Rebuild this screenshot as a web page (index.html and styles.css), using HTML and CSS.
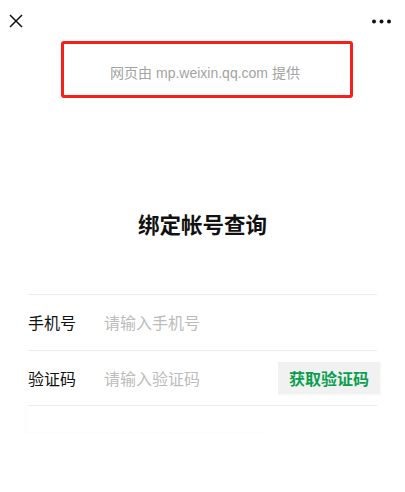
FILE: index.html
```html
<!DOCTYPE html>
<html lang="zh-CN">
<head>
<meta charset="utf-8">
<title>绑定帐号查询</title>
<link rel="stylesheet" href="styles.css">
</head>
<body>
<div class="page">
  <div class="topbar">
    <svg class="close" width="14" height="14" viewBox="0 0 14 14"><path d="M1 1L13 13M13 1L1 13" stroke="#111" stroke-width="1.5" fill="none"/></svg>
    <svg class="more" width="19" height="5" viewBox="0 0 19 5"><circle cx="2" cy="2.5" r="2" fill="#111"/><circle cx="9.5" cy="2.5" r="2" fill="#111"/><circle cx="17" cy="2.5" r="2" fill="#111"/></svg>
  </div>
  <div class="provider">网页由 mp.weixin.qq.com 提供</div>
  <h1 class="title">绑定帐号查询</h1>
  <div class="form">
    <div class="row">
      <span class="label">手机号</span>
      <span class="placeholder">请输入手机号</span>
    </div>
    <div class="row">
      <span class="label">验证码</span>
      <span class="placeholder">请输入验证码</span>
      <span class="btn">获取验证码</span>
    </div>
  </div>
  <div class="ghost"></div>
</div>
</body>
</html>
```
FILE: styles.css
```css
html, body {
  margin: 0;
  padding: 0;
  background: #fff;
}
body {
  font-family: "Liberation Sans", "Noto Sans CJK SC", sans-serif;
  color: #111;
}
.page {
  width: 405px;
  height: 492px;
  overflow: hidden;
}
.topbar {
  height: 41px;
  display: flex;
  justify-content: space-between;
  align-items: flex-start;
  padding: 0 14px 0 9px;
}
.close {
  margin-top: 14px;
}
.more {
  margin-top: 18.5px;
}
.provider {
  margin-left: 61px;
  width: 282px;
  height: 47px;
  border: 3px solid #f5201c;
  border-radius: 3px;
  display: flex;
  align-items: center;
  justify-content: center;
  font-size: 14px;
  color: #a3a3a3;
  padding: 4px 4px 0 0;
  box-sizing: content-box;
}
.title {
  margin: 113px 0 0;
  height: 83px;
  text-align: center;
  font-family: "Noto Sans CJK SC", sans-serif;
  font-size: 21.5px;
  font-weight: 700;
  line-height: 26px;
  color: #111;
}
.form {
  margin: 0 28px;
  border-top: 1px solid #ededed;
}
.row {
  height: 54.5px;
  border-bottom: 1px solid #ededed;
  display: flex;
  align-items: center;
  font-family: "Noto Sans CJK SC", sans-serif;
  font-size: 16px;
}
.label {
  width: 76px;
  color: #111;
}
.placeholder {
  flex: 1;
  color: #bcbcbc;
}
.btn {
  width: 102px;
  height: 32px;
  margin-right: -3px;
  background: #f1f1f1;
  color: #0a9f50;
  font-weight: 700;
  font-size: 16px;
  display: flex;
  align-items: center;
  justify-content: center;
  box-shadow: 1px 1px 2px rgba(0,0,0,0.04);
}
.ghost {
  margin: 0 0 0 25px;
  width: 240px;
  height: 26px;
  border-left: 1px solid #fafafa;
  border-bottom: 1px solid #fcfcfc;
}
```
